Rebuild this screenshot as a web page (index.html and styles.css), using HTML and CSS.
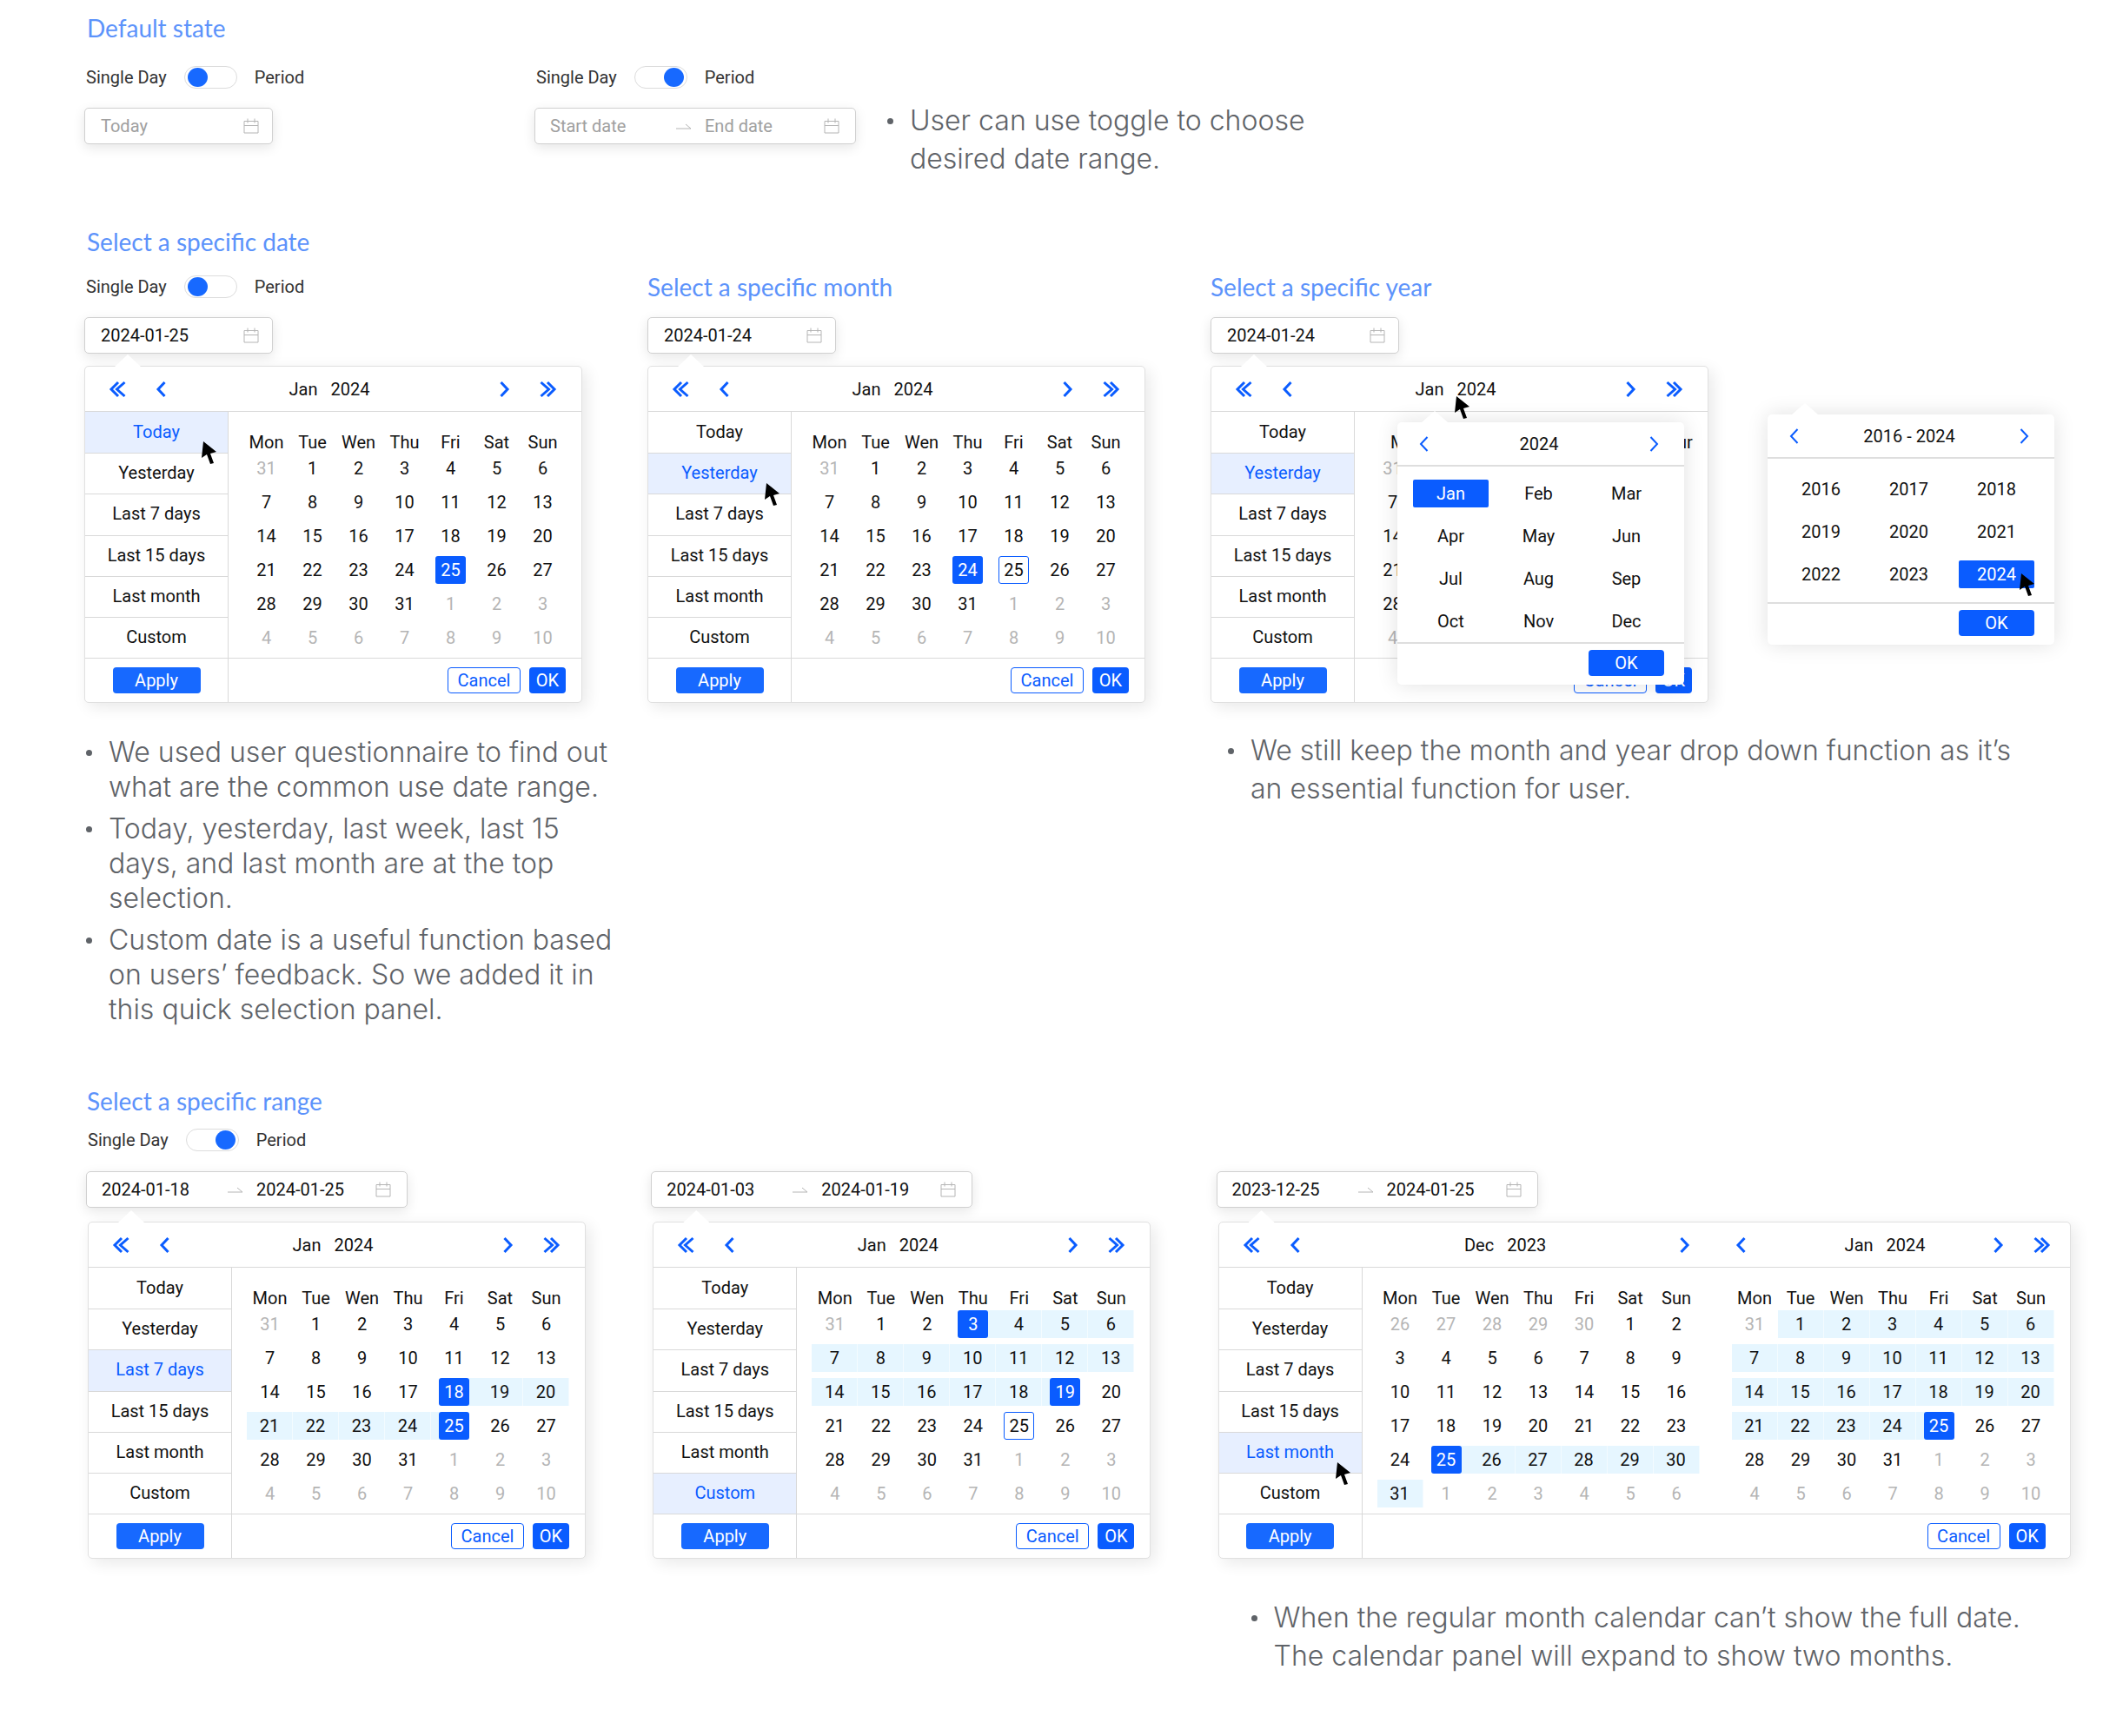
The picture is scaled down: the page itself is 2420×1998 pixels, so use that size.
FILE: index.html
```html
<!DOCTYPE html>
<html lang="en">
<head>
    <meta charset="UTF-8">
    <meta name="viewport" content="width=device-width, initial-scale=1.0">
    <title>Date Picker States</title>
    <link rel="stylesheet" href="styles.css">
</head>
<body>
    <!-- shared icons -->
    <svg class="icon-defs" aria-hidden="true">
        <symbol id="i-prev" viewBox="0 0 12 20"><path d="M10.500 2L3 10l7.500 8"/></symbol>
        <symbol id="i-next" viewBox="0 0 12 20"><path d="M1.500 2L9 10l-7.500 8"/></symbol>
        <symbol id="i-first" viewBox="0 0 20 20"><path d="M11 2L3 10l8 8M18.500 2L9.500 10l9 8"/></symbol>
        <symbol id="i-last" viewBox="0 0 20 20"><path d="M9 2l8 8-8 8M1.500 2l9 8-9 8"/></symbol>
        <symbol id="i-calendar" viewBox="0 0 18 18"><path d="M1 3.500h16v13.500H1zM1 8.500h16M5 .5v5M13 .5v5"/></symbol>
        <symbol id="i-arrow" viewBox="0 0 18 10"><path d="M0 8h17L11 3"/></symbol>
        <symbol id="i-cursor" viewBox="0 0 17 26"><path d="M2 0L0 19l6-4 4 11 4-1-4-11 7-2z"/></symbol>
    </svg>

    <main class="page">
        <section class="section section-default">
            <h2>Default state</h2>
            <div class="default-columns">
                <div class="picker">
                    <label class="toggle">Single Day <input type="checkbox" role="switch"> Period</label>
                    <div class="field">
                        <input type="text" placeholder="Today" aria-label="Date">
                        <svg class="calendar-icon"><use href="#i-calendar"/></svg>
                    </div>
                </div>
                <div class="picker-with-note">
                    <div class="picker">
                        <label class="toggle">Single Day <input type="checkbox" role="switch" checked> Period</label>
                        <div class="field field-range">
                            <input type="text" placeholder="Start date" aria-label="Start date">
                            <svg class="arrow-icon"><use href="#i-arrow"/></svg>
                            <input type="text" placeholder="End date" aria-label="End date">
                            <svg class="calendar-icon"><use href="#i-calendar"/></svg>
                        </div>
                    </div>
                    <ul class="notes notes-loose">
                        <li>User can use toggle to choose<br>desired date range.</li>
                    </ul>
                </div>
            </div>
        </section>

        <section class="section section-date">
            <h2>Select a specific date</h2>
            <div class="columns">
                <div class="column">
                    <label class="toggle">Single Day <input type="checkbox" role="switch"> Period</label>
                    <div class="field">
                        <input type="text" value="2024-01-25" aria-label="Date">
                        <svg class="calendar-icon"><use href="#i-calendar"/></svg>
                    </div>
                    <div class="panel" data-panel="today"></div>
                    <ul class="notes">
                        <li>We used user questionnaire to find out<br>what are the common use date range.</li>
                        <li>Today, yesterday, last week, last 15<br>days, and last month are at the top<br>selection.</li>
                        <li>Custom date is a useful function based<br>on users’ feedback. So we added it in<br>this quick selection panel.</li>
                    </ul>
                </div>

                <div class="column">
                    <h2>Select a specific month</h2>
                    <div class="field">
                        <input type="text" value="2024-01-24" aria-label="Date">
                        <svg class="calendar-icon"><use href="#i-calendar"/></svg>
                    </div>
                    <div class="panel" data-panel="yesterday"></div>
                </div>

                <div class="column">
                    <h2>Select a specific year</h2>
                    <div class="field">
                        <input type="text" value="2024-01-24" aria-label="Date">
                        <svg class="calendar-icon"><use href="#i-calendar"/></svg>
                    </div>
                    <div class="panel-row">
                        <div class="panel-wrap">
                            <div class="panel" data-panel="month"></div>
                            <div class="chooser chooser-month" data-chooser="month"></div>
                        </div>
                        <div class="chooser chooser-year" data-chooser="year"></div>
                    </div>
                    <ul class="notes notes-loose">
                        <li>We still keep the month and year drop down function as it’s<br>an essential function for user.</li>
                    </ul>
                </div>
            </div>
        </section>

        <section class="section section-range">
            <h2>Select a specific range</h2>
            <label class="toggle">Single Day <input type="checkbox" role="switch" checked> Period</label>
            <div class="columns">
                <div class="column">
                    <div class="field field-range">
                        <input type="text" value="2024-01-18" aria-label="Start date">
                        <svg class="arrow-icon"><use href="#i-arrow"/></svg>
                        <input type="text" value="2024-01-25" aria-label="End date">
                        <svg class="calendar-icon"><use href="#i-calendar"/></svg>
                    </div>
                    <div class="panel" data-panel="week"></div>
                </div>
                <div class="column">
                    <div class="field field-range">
                        <input type="text" value="2024-01-03" aria-label="Start date">
                        <svg class="arrow-icon"><use href="#i-arrow"/></svg>
                        <input type="text" value="2024-01-19" aria-label="End date">
                        <svg class="calendar-icon"><use href="#i-calendar"/></svg>
                    </div>
                    <div class="panel" data-panel="custom"></div>
                </div>
                <div class="column">
                    <div class="field field-range">
                        <input type="text" value="2023-12-25" aria-label="Start date">
                        <svg class="arrow-icon"><use href="#i-arrow"/></svg>
                        <input type="text" value="2024-01-25" aria-label="End date">
                        <svg class="calendar-icon"><use href="#i-calendar"/></svg>
                    </div>
                    <div class="panel panel-double" data-panel="lastMonth"></div>
                    <ul class="notes notes-loose">
                        <li>When the regular month calendar can’t show the full date.<br>The calendar panel will expand to show two months.</li>
                    </ul>
                </div>
            </div>
        </section>
    </main>

    <script src="script.js"></script>
</body>
</html>
```
FILE: styles.css
```css
* {
    margin: 0;
    padding: 0;
    box-sizing: border-box;
}

body {
    min-height: 100vh;
    background: #fff;
    color: #111;
    font-family: Roboto, "Liberation Sans", sans-serif;
    font-size: 20px;
    line-height: 24px;
}

button,
input {
    font: inherit;
    color: inherit;
    border: 0;
    background: none;
}

button {
    cursor: pointer;
}

svg {
    display: block;
    flex: none;
    fill: none;
}

.icon-defs {
    position: absolute;
    width: 0;
    height: 0;
}

.page {
    padding: 15px 20px 60px 97px;
}

h2 {
    padding-left: 3px;
    color: #5c93fb;
    font-family: Lato, sans-serif;
    font-size: 28px;
    font-weight: 400;
    line-height: 34px;
    white-space: nowrap;
}

.column h2 {
    padding-left: 0;
}

/* page grid */
.columns {
    display: grid;
    grid-template-columns: 650fr 650fr 1000fr;
}

.column {
    display: flex;
    flex-direction: column;
    align-items: flex-start;
}

.section-default {
    margin-bottom: 56px;
}

.default-columns {
    display: grid;
    grid-template-columns: 518fr 1785fr;
    margin-top: 27px;
}

.picker-with-note {
    display: flex;
    gap: 34px;
}

.picker .toggle {
    margin-bottom: 22px;
}

.picker-with-note .notes {
    margin-top: 41px;
}

.section-date {
    margin-bottom: 68px;
}

.section-date .columns {
    grid-template-columns: 648fr 648fr 1007fr;
    margin-top: 18px;
}

.section-date .toggle {
    height: 34px;
}

.section-date .field {
    margin: 18px 0 14px;
}

.section-range {
    padding-left: 2px;
}

.section-range h2 {
    padding-left: 1px;
}

.section-range .toggle {
    margin: 15px 0 23px;
}

.section-range .field {
    margin-bottom: 16px;
}

.section-range .panel {
    margin-left: 2px;
}

/* toggle */
.toggle {
    display: flex;
    align-items: center;
    gap: 20px;
    height: 26px;
    padding-left: 2px;
    color: #333;
}

.toggle input {
    display: flex;
    align-items: center;
    width: 61px;
    height: 26px;
    padding: 0 3px;
    appearance: none;
    border: 1px solid #dcdcdc;
    border-radius: 13px;
}

.toggle input::before {
    content: "";
    width: 23px;
    height: 22px;
    border-radius: 50%;
    background: #1769ff;
}

.toggle input:checked {
    justify-content: flex-end;
}

/* date field */
.field {
    display: flex;
    align-items: center;
    width: 217px;
    height: 42px;
    padding: 0 15px 0 18px;
    border: 1px solid #d0d0d0;
    border-radius: 5px;
    background: #fff;
    box-shadow: 0 4px 14px rgba(0, 0, 0, 0.1);
}

.field-range {
    width: 370px;
    padding: 0 18px 0 17px;
}

.field input {
    flex: 1;
    min-width: 0;
    outline: none;
}

.field-range input:first-child {
    flex: 0 0 145px;
}

.field input::placeholder {
    color: #a0a0a0;
    opacity: 1;
}

.calendar-icon {
    width: 18px;
    height: 18px;
    stroke: #b5b5b5;
}

.arrow-icon {
    width: 18px;
    height: 10px;
    margin-right: 15px;
    stroke: #b5b5b5;
}

/* calendar panel */
.panel {
    position: relative;
    width: max-content;
    border: 1px solid #e0e0e0;
    border-radius: 5px;
    background: #fff;
    box-shadow: 5px 5px 18px rgba(0, 0, 0, 0.09);
}

.panel::before,
.chooser::before {
    content: "";
    position: absolute;
    bottom: 100%;
    left: 34px;
    width: 30px;
    height: 14px;
    background: #fff;
    clip-path: polygon(50% 0, 100% 100%, 0 100%);
}

.panel-header {
    display: flex;
    align-items: center;
    height: 52px;
    padding: 0 28px 0 27px;
    border-bottom: 1px solid #d9d9d9;
}

.month-nav {
    display: flex;
    flex: 1;
    align-items: center;
    gap: 34px;
}

.month-title {
    display: flex;
    flex: 1;
    justify-content: center;
    gap: 15px;
    padding-right: 8px;
}

.month-title span {
    position: relative;
}

.panel-double .panel-header {
    padding-right: 22px;
}

.panel-double .month-nav:first-child {
    flex: 0 0 515px;
}

.panel-double .month-nav:last-child {
    margin-left: 52px;
}

.panel-double .month-title {
    padding: 0 0 0 36px;
}

.nav-button {
    display: block;
}

.nav-button svg {
    width: 12px;
    height: 20px;
    stroke: #0a5cff;
    stroke-width: 3;
}

.nav-button .icon-wide {
    width: 20px;
}

.panel-body {
    display: flex;
    height: 283px;
}

.presets {
    display: grid;
    grid-auto-rows: 1fr;
    width: 165px;
    border-right: 1px solid #d9d9d9;
    list-style: none;
}

.presets li {
    position: relative;
    display: flex;
}

.presets li + li {
    border-top: 1px solid #d9d9d9;
}

.presets button {
    flex: 1;
    padding-bottom: 2px;
}

.presets .active {
    background: #e7efff;
    color: #0a5cff;
}

.months {
    display: flex;
    gap: 37px;
    padding: 21px 18px 0 17px;
}

.month {
    border-collapse: separate;
    border-spacing: 0 7px;
    table-layout: fixed;
    width: 371px;
}

.month th {
    height: 14px;
    font-weight: 400;
    line-height: 14px;
}

.month td {
    height: 32px;
    text-align: center;
}

.month td button {
    display: block;
    width: 35px;
    height: 32px;
    margin: 0 auto;
    border-radius: 3px;
}

.month .muted {
    color: #b5b5b5;
}

.month .in-range {
    border-right: 1px solid #f3fbff;
    background: #e6f6ff;
}

.month .selected button {
    background: #0a5cff;
    color: #fff;
}

.month .current button {
    border: 1px solid #0a5cff;
}

.month .range-start {
    background: linear-gradient(to right, transparent 50%, #e6f6ff 50%);
}

.month .range-end {
    background: linear-gradient(to right, #e6f6ff 50%, transparent 50%);
}

/* the open drop down covers these columns */
.month-covered th {
    padding-left: 24px;
}

.month-covered th:not(:first-child):not(:last-child),
.month-covered td:not(:first-child) {
    visibility: hidden;
}

.panel-footer {
    display: flex;
    height: 51px;
    border-top: 1px solid #d9d9d9;
}

.footer-left {
    display: flex;
    align-items: center;
    justify-content: center;
    width: 165px;
    border-right: 1px solid #d9d9d9;
}

.footer-right {
    display: flex;
    flex: 1;
    align-items: center;
    justify-content: flex-end;
    gap: 10px;
    padding-right: 18px;
}

.panel-double .footer-right {
    padding-right: 28px;
}

.button {
    height: 30px;
    border-radius: 4px;
    background: #0a5cff;
    color: #fff;
}

.button-apply {
    width: 101px;
    background: #1769ff;
}

.button-cancel {
    width: 84px;
    border: 1px solid #0a5cff;
    background: #fff;
    color: #0a5cff;
}

.button-ok {
    width: 42px;
}

/* month and year drop down */
.panel-row {
    display: flex;
    align-items: flex-start;
    gap: 68px;
}

.panel-wrap {
    position: relative;
}

.chooser {
    width: 330px;
    border-radius: 5px;
    background: #fff;
    box-shadow: 0 0 24px rgba(0, 0, 0, 0.12);
}

.chooser::before {
    left: 28px;
    height: 13px;
}

.chooser-month {
    position: absolute;
    top: 65px;
    left: 215px;
}

.chooser-year {
    position: relative;
    margin-top: 56px;
}

.chooser-header {
    display: flex;
    align-items: center;
    justify-content: space-between;
    height: 51px;
    padding: 0 28px 0 24px;
    border-bottom: 2px solid #dedede;
}

.chooser-header svg {
    stroke-width: 2;
}

.chooser-grid {
    display: grid;
    grid-template-columns: repeat(3, 1fr);
    gap: 17px 14px;
    padding: 15px 23px 8px 18px;
}

.chooser-year .chooser-grid {
    padding-top: 19px;
    padding-bottom: 16px;
}

.chooser-grid button {
    position: relative;
    height: 32px;
    border-radius: 2px;
}

.chooser-grid .active {
    background: #0a5cff;
    color: #fff;
}

.chooser-footer {
    display: flex;
    justify-content: flex-end;
    padding: 7px 23px 10px;
    border-top: 2px solid #dedede;
}

.chooser-footer .button {
    width: 87px;
}

/* mouse pointer over the hovered item */
.cursor {
    position: absolute;
    z-index: 2;
    width: 17px;
    height: 26px;
    fill: #000;
}

.presets .cursor {
    top: 34px;
    left: 134px;
}

.month-title .cursor {
    top: 20px;
    left: -3px;
}

.chooser-grid .cursor {
    top: 15px;
    left: 70px;
}

/* notes */
.notes {
    margin-top: 37px;
    color: #5f6368;
    font-family: Inter, sans-serif;
    font-size: 32px;
    font-weight: 300;
    line-height: 40px;
    list-style: none;
    white-space: nowrap;
}

.notes li {
    position: relative;
    padding-left: 28px;
}

.notes li + li {
    margin-top: 8px;
}

.notes li::before {
    content: "";
    position: absolute;
    top: 17px;
    left: 2px;
    width: 7px;
    height: 7px;
    border-radius: 50%;
    background: #5f6368;
}

.notes-loose {
    line-height: 44px;
}

.notes-loose li::before {
    top: 19px;
}

.section-date .notes-loose {
    margin: 33px 0 0 18px;
}

.section-range .notes-loose {
    margin: 46px 0 0 38px;
}
```
FILE: script.js
```js
const presets = ['Today', 'Yesterday', 'Last 7 days', 'Last 15 days', 'Last month', 'Custom'];
const weekdays = ['Mon', 'Tue', 'Wen', 'Thu', 'Fri', 'Sat', 'Sun'];
const cursor = '<svg class="cursor"><use href="#i-cursor"/></svg>';

// lead: trailing days of the previous month, days: length of this month
const jan = { name: 'Jan', year: 2024, lead: [31], days: 31 };
const dec = { name: 'Dec', year: 2023, lead: [26, 27, 28, 29, 30], days: 31 };

const panels = {
    today: { active: 'Today', hover: true, months: [{ ...jan, selected: [25] }] },
    yesterday: { active: 'Yesterday', hover: true, months: [{ ...jan, selected: [24], current: 25 }] },
    month: {
        active: 'Yesterday',
        hoverYear: true,
        months: [{ ...jan, selected: [24], current: 25, weekdays: ['Mon', 'Tue', 'Wen', 'Thu', 'Fri', 'Sat', 'Sur'] }]
    },
    week: { active: 'Last 7 days', months: [{ ...jan, start: 18, end: 25 }] },
    custom: { active: 'Custom', months: [{ ...jan, start: 3, end: 19, current: 25 }] },
    lastMonth: {
        active: 'Last month',
        hover: true,
        months: [{ ...dec, start: 25, end: 32 }, { ...jan, start: 0, end: 25 }]
    }
};

function navButton(icon, label) {
    const wide = icon === 'first' || icon === 'last' ? 'icon-wide' : '';
    return `<button type="button" class="nav-button" aria-label="${label}"><svg class="${wide}"><use href="#i-${icon}"/></svg></button>`;
}

function dayClass(day, month) {
    const classes = [];
    if (day === month.start || day === month.end || (month.selected || []).includes(day)) classes.push('selected');
    if (day === month.start) classes.push('range-start');
    if (day === month.end) classes.push('range-end');
    if (day > month.start && day < month.end) classes.push('in-range');
    if (day === month.current) classes.push('current');
    return classes.join(' ');
}

function renderMonth(month) {
    const cells = month.lead.map(day => ({ day, cls: 'muted' }));
    for (let day = 1; day <= month.days; day++) cells.push({ day, cls: dayClass(day, month) });
    for (let day = 1; cells.length < 42; day++) cells.push({ day, cls: 'muted' });

    let rows = '';
    for (let i = 0; i < 42; i += 7) {
        rows += '<tr>' + cells.slice(i, i + 7)
            .map(c => `<td class="${c.cls}"><button type="button">${c.day}</button></td>`).join('') + '</tr>';
    }
    const head = (month.weekdays || weekdays).map(d => `<th scope="col">${d}</th>`).join('');
    return `<table class="month ${month.weekdays ? 'month-covered' : ''}"><thead><tr>${head}</tr></thead><tbody>${rows}</tbody></table>`;
}

function renderPanel(panel) {
    const last = panel.months.length - 1;
    const header = panel.months.map((m, i) => `
        <div class="month-nav">
            ${i === 0 ? navButton('first', 'Previous year') : ''}
            ${navButton('prev', 'Previous month')}
            <div class="month-title"><span>${m.name}</span><span>${m.year}${panel.hoverYear ? cursor : ''}</span></div>
            ${navButton('next', 'Next month')}
            ${i === last ? navButton('last', 'Next year') : ''}
        </div>`).join('');

    const list = presets.map(name => {
        const active = name === panel.active;
        return `<li class="${active ? 'active' : ''}"><button type="button">${name}</button>${active && panel.hover ? cursor : ''}</li>`;
    }).join('');

    return `
        <div class="panel-header">${header}</div>
        <div class="panel-body">
            <ul class="presets">${list}</ul>
            <div class="months">${panel.months.map(renderMonth).join('')}</div>
        </div>
        <div class="panel-footer">
            <div class="footer-left"><button type="button" class="button button-apply">Apply</button></div>
            <div class="footer-right">
                <button type="button" class="button button-cancel">Cancel</button>
                <button type="button" class="button button-ok">OK</button>
            </div>
        </div>`;
}

const choosers = {
    month: {
        title: '2024',
        active: 'Jan',
        items: ['Jan', 'Feb', 'Mar', 'Apr', 'May', 'Jun', 'Jul', 'Aug', 'Sep', 'Oct', 'Nov', 'Dec']
    },
    year: {
        title: '2016 - 2024',
        active: '2024',
        hover: true,
        items: ['2016', '2017', '2018', '2019', '2020', '2021', '2022', '2023', '2024']
    }
};

function renderChooser(chooser) {
    const items = chooser.items.map(item => {
        const active = item === chooser.active;
        return `<button type="button" class="${active ? 'active' : ''}">${item}${active && chooser.hover ? cursor : ''}</button>`;
    }).join('');
    return `
        <div class="chooser-header">${navButton('prev', 'Previous')}<span>${chooser.title}</span>${navButton('next', 'Next')}</div>
        <div class="chooser-grid">${items}</div>
        <div class="chooser-footer"><button type="button" class="button">OK</button></div>`;
}

document.querySelectorAll('[data-panel]').forEach(el => {
    el.innerHTML = renderPanel(panels[el.dataset.panel]);
});

document.querySelectorAll('[data-chooser]').forEach(el => {
    el.innerHTML = renderChooser(choosers[el.dataset.chooser]);
});
```
